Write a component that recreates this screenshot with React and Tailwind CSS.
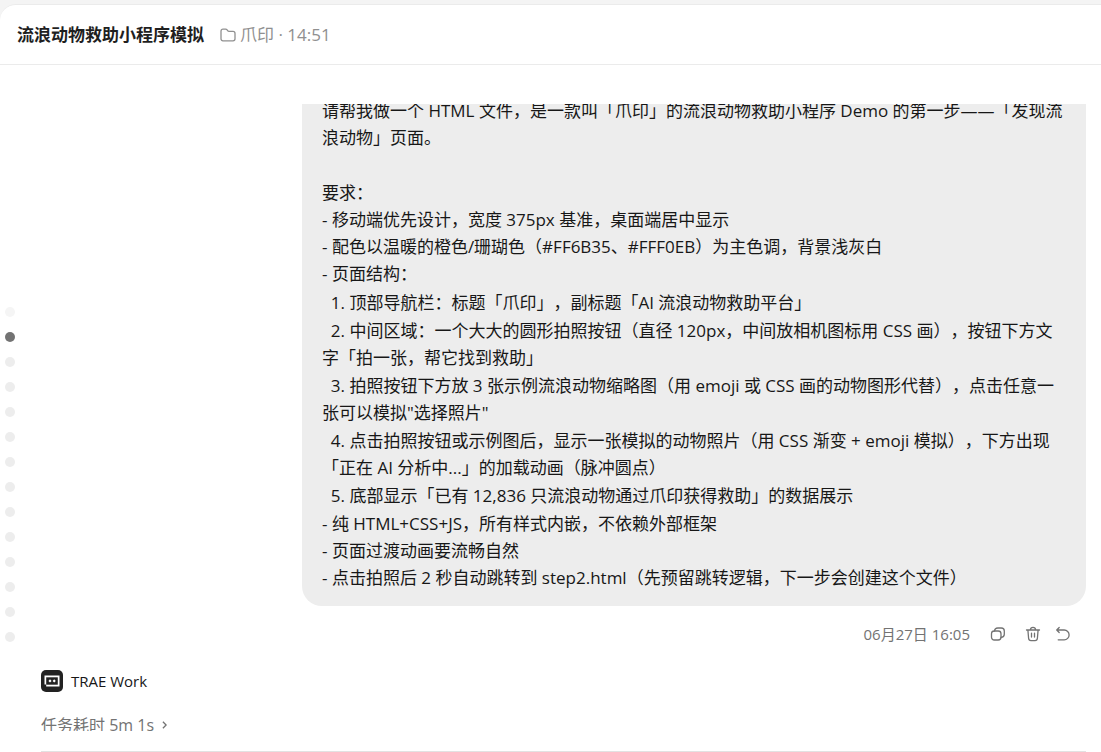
import clsx from 'clsx'

const ACTIVE_TURN = 1
const TURNS = Array.from({ length: 14 }, (_, i) => i)

const INTRO =
  '请帮我做一个 HTML 文件，是一款叫「爪印」的流浪动物救助小程序 Demo 的第一步——「发现流\n浪动物」页面。'

const BASICS = [
  '- 移动端优先设计，宽度 375px 基准，桌面端居中显示',
  '- 配色以温暖的橙色/珊瑚色（#FF6B35、#FFF0EB）为主色调，背景浅灰白',
  '- 页面结构：',
]

const STRUCTURE = [
  '  1. 顶部导航栏：标题「爪印」，副标题「AI 流浪动物救助平台」',
  '  2. 中间区域：一个大大的圆形拍照按钮（直径 120px，中间放相机图标用 CSS 画），按钮下方文\n字「拍一张，帮它找到救助」',
  '  3. 拍照按钮下方放 3 张示例流浪动物缩略图（用 emoji 或 CSS 画的动物图形代替），点击任意一\n张可以模拟"选择照片"',
  '  4. 点击拍照按钮或示例图后，显示一张模拟的动物照片（用 CSS 渐变 + emoji 模拟），下方出现\n「正在 AI 分析中...」的加载动画（脉冲圆点）',
  '  5. 底部显示「已有 12,836 只流浪动物通过爪印获得救助」的数据展示',
]

const TECH = [
  '- 纯 HTML+CSS+JS，所有样式内嵌，不依赖外部框架',
  '- 页面过渡动画要流畅自然',
  '- 点击拍照后 2 秒自动跳转到 step2.html（先预留跳转逻辑，下一步会创建这个文件）',
]

const iconProps = {
  viewBox: '0 0 16 16',
  fill: 'none',
  stroke: 'currentColor',
  strokeWidth: 1.3,
  strokeLinecap: 'round',
  strokeLinejoin: 'round',
  className: 'size-4 shrink-0',
  'aria-hidden': true,
}

function FolderIcon() {
  return (
    <svg {...iconProps}>
      <path d="M1 4.2C1 3 1.8 2.2 3 2.2h2.6c.6 0 1.1.2 1.5.7l.9 1.1c.2.3.5.4.9.4H13c1.200 0 2 .8 2 2v5.400c0 1.200-.8 2-2 2H3c-1.200 0-2-.8-2-2z" />
    </svg>
  )
}

function CopyIcon() {
  return (
    <svg {...iconProps}>
      <rect x="1.500" y="5" width="9.500" height="9" rx="2.800" />
      <path d="M4.500 5C4.700 3 6 2 7.800 2h3.500c1.700 0 3 1.300 3 3v3.200c0 1.800-1.100 3-3.300 3.200" />
    </svg>
  )
}

function TrashIcon() {
  return (
    <svg {...iconProps}>
      <path d="M1.500 4h13M5.300 4c.2-1.700 1.200-2.700 2.700-2.700s2.500 1 2.700 2.700M2.900 4l.7 8.300c.1 1.500 1 2.400 2.400 2.400h4c1.400 0 2.300-.9 2.400-2.400L13.100 4M6.500 7.200v3.800M9.500 7.200v3.800" />
    </svg>
  )
}

function UndoIcon() {
  return (
    <svg {...iconProps}>
      <path d="M4.200 1.500 1.700 4l2.500 2.500M1.700 4h7.500a4.900 4.900 0 0 1 0 9.800H3.200" />
    </svg>
  )
}

function TraeLogo() {
  return (
    <svg viewBox="0 0 22 22" className="size-[22px] shrink-0" aria-hidden="true">
      <rect width="22" height="22" rx="5" fill="#222" />
      <path d="M3.500 5.500h15v11H5.200v-2H3.500z" fill="#fff" />
      <path d="M5.200 7.300h11.600v7.400H5.200z" fill="#222" />
      <path d="m9 9.300 1.600 1.600L9 12.500 7.400 10.900zM13.200 9.300l1.600 1.600-1.600 1.600-1.600-1.600z" fill="#fff" />
    </svg>
  )
}

function Header() {
  return (
    <header className="flex h-[60px] shrink-0 items-center border-b border-[#ebebeb] px-[17px] text-[17px]">
      <h1 className="text-[17px] font-bold text-[#1f1f1f]">流浪动物救助小程序模拟</h1>
      <div className="ml-4 flex items-center gap-1 text-[#909090]">
        <FolderIcon />
        <span>爪印 · 14:51</span>
      </div>
    </header>
  )
}

function TurnRail() {
  return (
    <nav aria-label="对话轮次" className="flex w-[41px] shrink-0 flex-col gap-[15px] pt-[242px] pl-[5px]">
      {TURNS.map((i) => (
        <button
          key={i}
          type="button"
          aria-label={`第 ${i + 1} 轮`}
          className={clsx(
            'size-[10px] shrink-0 rounded-full',
            i === ACTIVE_TURN ? 'bg-[#737373]' : i === 0 ? 'bg-[#f5f5f5]' : 'bg-[#ededed]'
          )}
        />
      ))}
    </nav>
  )
}

function Lines({ items, className }) {
  return (
    <ul className={className}>
      {items.map((text) => (
        <li key={text}>{text}</li>
      ))}
    </ul>
  )
}

function UserMessage() {
  return (
    <div className="-mt-[27px] flex flex-col items-end">
      <div className="w-3/4 min-w-[784px] rounded-[20px] bg-[#ededed] px-5 pt-5 pb-[15px] text-[17px] leading-[27px] whitespace-pre-wrap text-[#171717] [text-spacing-trim:space-all]">
        <p>{INTRO}</p>
        <p className="mt-7">要求：</p>
        <Lines items={BASICS} />
        <Lines items={STRUCTURE} className="mt-0.5 mb-px flex flex-col gap-px" />
        <Lines items={TECH} />
      </div>
      <div className="mt-4 mr-[15px] flex h-6 items-center text-[15px] text-[#737373]">
        <time>06月27日 16:05</time>
        <button type="button" aria-label="复制" className="ml-5">
          <CopyIcon />
        </button>
        <button type="button" aria-label="删除" className="ml-[19px]">
          <TrashIcon />
        </button>
        <button type="button" aria-label="撤销" className="ml-[14px]">
          <UndoIcon />
        </button>
      </div>
    </div>
  )
}

function AgentReply() {
  return (
    <section className="mt-[23px]">
      <div className="flex items-center gap-2 text-[15px] leading-6 text-[#171717]">
        <TraeLogo />
        <span>TRAE Work</span>
      </div>
      <button type="button" className="mt-5 flex items-center gap-2 text-base leading-6 text-[#737373]">
        任务耗时 5m 1s
        <svg viewBox="0 0 6 10" className="h-2 w-[5px]" fill="none" stroke="currentColor" strokeWidth="1.6" aria-hidden="true">
          <path d="m1 1 4 4-4 4" />
        </svg>
      </button>
    </section>
  )
}

export default function App() {
  return (
    <div className="flex h-screen flex-col overflow-hidden bg-[#f4f4f4] pt-1 font-['Open_Sans','Noto_Sans_CJK_SC',sans-serif]">
      <div className="flex min-h-0 flex-1 flex-col rounded-tl-2xl border-t border-[#ebebeb] bg-white">
        <Header />
        <div className="flex min-h-0 flex-1">
          <TurnRail />
          <main className="flex min-w-0 flex-1 flex-col pt-[39px] pr-[15px]">
            <div className="min-h-0 flex-1 overflow-hidden">
              <UserMessage />
              <AgentReply />
            </div>
            {/* top edge of the composer */}
            <div className="mt-5 h-px shrink-0 bg-[#e2e2e2]" />
          </main>
        </div>
      </div>
    </div>
  )
}
